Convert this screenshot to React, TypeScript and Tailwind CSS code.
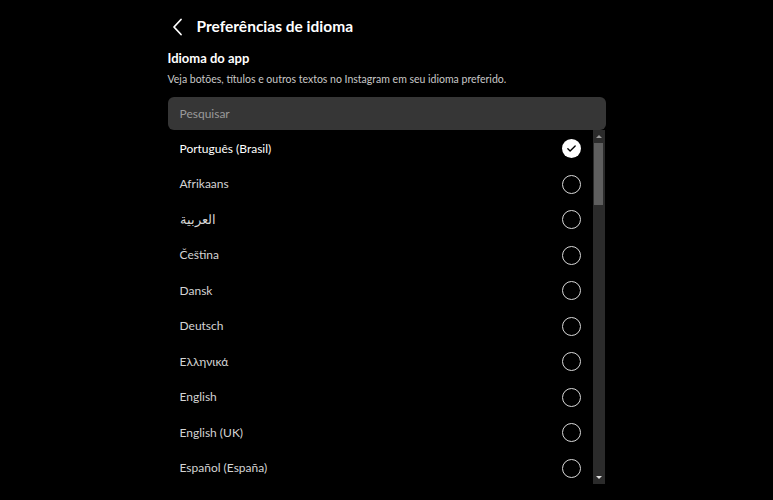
import { useState } from 'react';

const languages = [
  'Português (Brasil)',
  'Afrikaans',
  'العربية',
  'Čeština',
  'Dansk',
  'Deutsch',
  'Ελληνικά',
  'English',
  'English (UK)',
  'Español (España)',
];

function Radio({ checked }: { checked: boolean }) {
  if (checked) {
    return (
      <span className="flex h-[19px] w-[19px] items-center justify-center rounded-full bg-white">
        <svg width="11" height="11" viewBox="0 0 24 24" fill="none" stroke="#000" strokeWidth="3" strokeLinecap="round" strokeLinejoin="round">
          <path d="M4 12.5l5 5L20 6.5" />
        </svg>
      </span>
    );
  }
  return <span className="h-[19px] w-[19px] rounded-full border-[1.5px] border-[#d8d8d8]" />;
}

export default function App() {
  const [selected] = useState(0);

  return (
    <div className="h-[500px] w-full overflow-hidden bg-black font-['Lato','Noto_Sans',sans-serif] text-white">
      <div className="mx-auto w-[438px]">
        <div className="flex h-[54px] items-center gap-[13px] pl-[4px]">
          <svg width="12" height="18" viewBox="0 0 12 18" fill="none" stroke="#fff" strokeWidth="1.8" strokeLinecap="round" strokeLinejoin="round">
            <path d="M9 1.5L2 9l7 7.5" />
          </svg>
          <h1 className="text-[15.5px] font-bold">Preferências de idioma</h1>
        </div>
        <h2 className="mt-[-5px] text-[13px] font-bold leading-[18px]">Idioma do app</h2>
        <p className="mt-[4px] text-[10.5px] leading-[16px] text-[#c8c8c8]">
          Veja botões, títulos e outros textos no Instagram em seu idioma preferido.
        </p>
        <div className="mt-[10px] flex h-[33px] items-center rounded-[6px] bg-[#363636] px-[12px] text-[12px] text-[#9a9a9a]">
          Pesquisar
        </div>
        <div className="flex h-[354px]">
          <ul className="flex-1 overflow-hidden pt-[1px]">
            {languages.map((lang, i) => (
              <li key={lang} className="flex h-[35.5px] items-center justify-between pl-[12px] pr-[12px]">
                <span className={`${i === 2 ? 'text-[13px]' : 'text-[12px]'} ${i === selected ? 'text-white' : 'text-[#d4d4d4]'}`}>{lang}</span>
                <Radio checked={i === selected} />
              </li>
            ))}
          </ul>
          <div className="mr-[1px] flex w-[12px] flex-col items-center bg-[#2b2b2b]">
            <div className="flex h-[13px] items-center justify-center">
              <span className="h-0 w-0 border-x-[3px] border-b-[3px] border-x-transparent border-b-[#9a9a9a]" />
            </div>
            <div className="h-[62px] w-[9px] bg-[#5e5e5e]" />
            <div className="flex-1" />
            <div className="flex h-[13px] items-center justify-center">
              <span className="h-0 w-0 border-x-[3px] border-t-[3px] border-x-transparent border-t-[#e0e0e0]" />
            </div>
          </div>
        </div>
      </div>
    </div>
  );
}
